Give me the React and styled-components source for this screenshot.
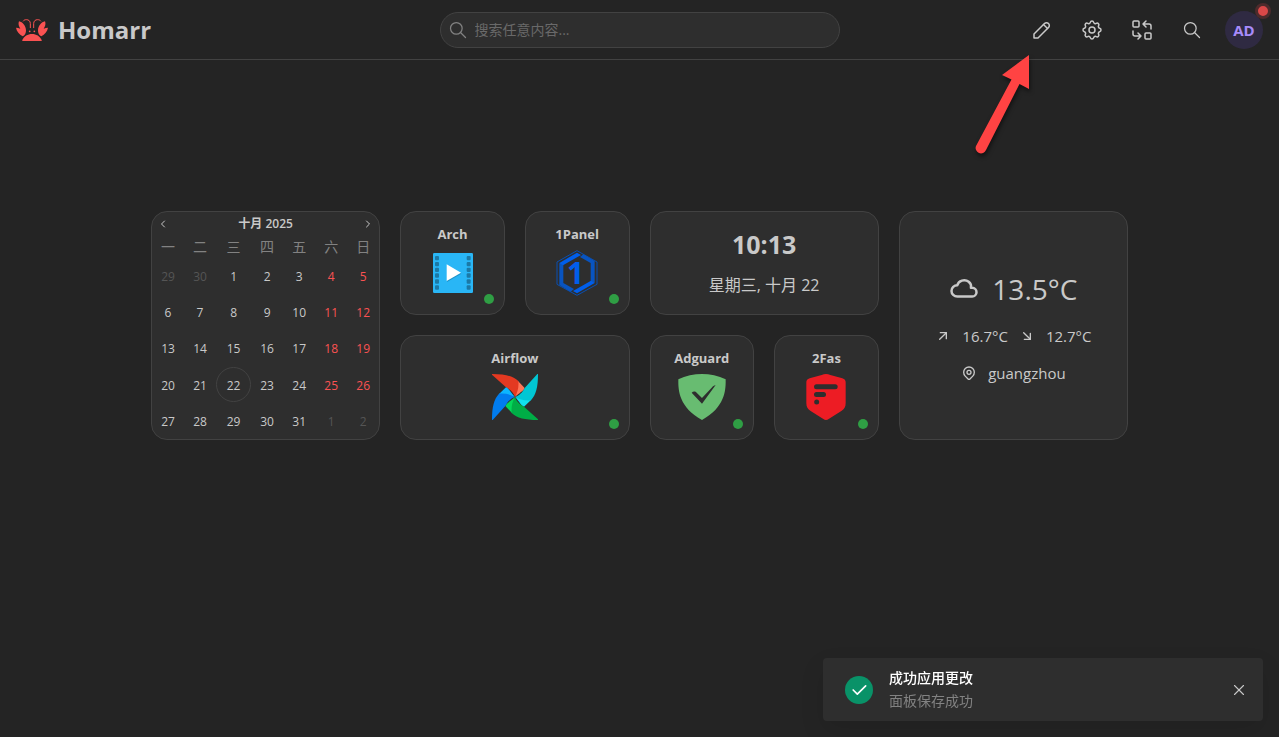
import React from 'react';
import styled, { createGlobalStyle } from 'styled-components';
import {
  TbPencil,
  TbSettings,
  TbReplace,
  TbSearch,
  TbChevronLeft,
  TbChevronRight,
  TbCloud,
  TbArrowUpRight,
  TbArrowDownRight,
  TbMapPin,
  TbCheck,
  TbX,
} from 'react-icons/tb';

const weekdays = ['一', '二', '三', '四', '五', '六', '日'];
const firstDay = new Date(2025, 8, 29);
const today = 22;

const weeks = [0, 1, 2, 3, 4].map((week) =>
  weekdays.map((_, day) => {
    const date = new Date(firstDay);
    date.setDate(firstDay.getDate() + week * 7 + day);
    return { day: date.getDate(), outside: date.getMonth() !== 9, weekend: day > 4 };
  })
);

const App = () => (
  <>
    <GlobalStyle />
    <Header />
    <Board>
      <Calendar />
      <AppTile name="Arch"><ArchIcon /></AppTile>
      <AppTile name="1Panel"><PanelIcon /></AppTile>
      <Clock />
      <Weather />
      <AppTile name="Airflow" span={2}><AirflowIcon /></AppTile>
      <AppTile name="Adguard"><AdguardIcon /></AppTile>
      <AppTile name="2Fas"><TwoFasIcon /></AppTile>
    </Board>
    <Notification />
    <PointerArrow />
  </>
);

export default App;

const Header = () => (
  <HeaderBar>
    <Brand href="#home">
      <LobsterLogo />
      <BrandName>Homarr</BrandName>
    </Brand>
    <SearchBox>
      <TbSearch size={20} />
      <SearchInput type="search" aria-label="搜索" placeholder="搜索任意内容..." />
    </SearchBox>
    <Actions>
      <ActionButton aria-label="编辑"><TbPencil size={24} /></ActionButton>
      <ActionButton aria-label="设置"><TbSettings size={24} /></ActionButton>
      <ActionButton aria-label="切换面板"><TbReplace size={24} /></ActionButton>
      <ActionButton aria-label="搜索"><TbSearch size={20} /></ActionButton>
      <Avatar>
        AD
        <AvatarDot />
      </Avatar>
    </Actions>
  </HeaderBar>
);

const Calendar = () => (
  <CalendarCard>
    <CalendarHeader>
      <MonthButton aria-label="上个月"><TbChevronLeft size={12} /></MonthButton>
      <MonthName>十月 2025</MonthName>
      <MonthButton aria-label="下个月"><TbChevronRight size={12} /></MonthButton>
    </CalendarHeader>
    <MonthTable>
      <thead>
        <tr>
          {weekdays.map((name) => <Weekday key={name}>{name}</Weekday>)}
        </tr>
      </thead>
      <tbody>
        {weeks.map((week) => (
          <tr key={week[0].day}>
            {week.map(({ day, outside, weekend }) => (
              <DayCell key={day}>
                <DayButton $outside={outside} $weekend={weekend} $today={day === today}>
                  {day}
                </DayButton>
              </DayCell>
            ))}
          </tr>
        ))}
      </tbody>
    </MonthTable>
  </CalendarCard>
);

const AppTile = ({ name, span = 1, children }) => (
  <TileLink href={`#${name.toLowerCase()}`} $span={span}>
    <TileName>{name}</TileName>
    {children}
    <StatusDot />
  </TileLink>
);

const Clock = () => (
  <ClockCard>
    <Time>10:13</Time>
    <Today>星期三, 十月 22</Today>
  </ClockCard>
);

const Weather = () => (
  <WeatherCard>
    <Temperature>
      <TbCloud size={30} />
      13.5°C
    </Temperature>
    <WeatherRow>
      <TbArrowUpRight size={16} />
      <span>16.7°C</span>
      <TbArrowDownRight size={16} />
      <span>12.7°C</span>
    </WeatherRow>
    <WeatherRow>
      <TbMapPin size={16} />
      <span>guangzhou</span>
    </WeatherRow>
  </WeatherCard>
);

const Notification = () => (
  <Toast role="status">
    <ToastIcon><TbCheck size={20} /></ToastIcon>
    <ToastBody>
      <ToastTitle>成功应用更改</ToastTitle>
      <ToastText>面板保存成功</ToastText>
    </ToastBody>
    <CloseButton aria-label="关闭"><TbX size={18} /></CloseButton>
  </Toast>
);

// Drawings

const LobsterLogo = () => (
  <svg width="32" height="22" viewBox="0 0 96 66" fill="#fa5252">
    <path d="M21 66c-2 0-3-1-2-3 5-11 16-18 29-18s24 7 29 18c1 2 0 3-2 3z" />
    <path d="M9 7c11 2 21 14 21 28 0 8-4 14-10 17C10 46 2 38 0 26c4 0 9 1 13 3C8 22 6 14 9 7z" />
    <path d="M87 7c-11 2-21 14-21 28 0 8 4 14 10 17 10-6 18-14 20-26-4 0-9 1-13 3 5-7 7-15 4-22z" />
    <circle cx="41" cy="37" r="2.6" />
    <circle cx="55" cy="37" r="2.6" />
    <path
      d="M43 26V14C43 6 38 2 31 2c-4 0-7 1-9 4M53 26V14C53 6 58 2 65 2c4 0 7 1 9 4"
      fill="none"
      stroke="#fa5252"
      strokeWidth="3"
      strokeLinecap="round"
    />
  </svg>
);

const sprockets = [9, 27, 44, 61, 79, 97];

const ArchIcon = () => (
  <svg width="40" height="46" viewBox="0 0 120 138">
    <rect x="0" y="9" width="120" height="120" rx="4" fill="#29b6f6" />
    {sprockets.map((y) => (
      <g key={y} fill="#1b79a6">
        <rect x="6" y={y + 9} width="12" height="13" rx="3" />
        <rect x="101" y={y + 9} width="12" height="13" rx="3" />
      </g>
    ))}
    <path d="M42 46l43 25-43 25z" fill="#176f98" opacity="0.5" />
    <path d="M41 43l43 25-43 25z" fill="#fff" />
  </svg>
);

const PanelIcon = () => (
  <svg width="42" height="46" viewBox="0 0 124 138">
    <path d="M62 2l60 34v67l-60 33-60-33V36z" fill="none" stroke="#0a4fb0" strokeWidth="3" />
    <path d="M9 40l12-1v60l32 18-10 8-34-20z" fill="#0854c1" />
    <path d="M115 98l-12 1V39L71 21l10-8 34 20z" fill="#0854c1" />
    <path d="M9 39L62 8l12 7-54 31z" fill="#005eeb" />
    <path d="M115 99l-53 31-12-7 54-31z" fill="#005eeb" />
    <text
      x="58"
      y="102"
      textAnchor="middle"
      fontFamily="'Open Sans', sans-serif"
      fontWeight="700"
      fontSize="90"
      fill="#005eeb"
    >
      1
    </text>
  </svg>
);

const blades = [
  { angle: 0, dark: '#e43921', light: '#ff7557' },
  { angle: 90, dark: '#00c7d4', light: '#11e1ee' },
  { angle: 180, dark: '#00ad46', light: '#04d659' },
  { angle: 270, dark: '#017cee', light: '#0cb6ff' },
];

const AirflowIcon = () => (
  <svg width="46" height="46" viewBox="0 0 138 138">
    {blades.map(({ angle, dark, light }) => (
      <g key={angle} transform={`rotate(${angle} 69 69)`}>
        <path d="M78 21l20 21c-4 10-16 14-29 27z" fill={light} />
        <path d="M69 69C66 58 56 47 42 40L0 2c-1-1 0-2 1-2 38 0 62 6 78 21 2 18-2 34-10 48z" fill={dark} />
      </g>
    ))}
    <circle cx="69" cy="69" r="3" fill="#51504f" />
  </svg>
);

const AdguardIcon = () => (
  <svg width="48" height="46" viewBox="0 0 142 138">
    <path d="M71 0C48 0 21 5 0 16c0 24-3 82 71 122 74-40 71-98 71-122C121 5 94 0 71 0z" fill="#68bc71" />
    <path d="M71 89L40 56c6-6 12-3 15 0l16 16 29-31c3-3 7-7 12-8z" fill="#2e2e2e" />
  </svg>
);

const TwoFasIcon = () => (
  <svg width="40" height="46" viewBox="0 0 118 138">
    <path
      d="M46 3c9-4 17-4 26 0l36 10c7 2 10 6 10 12v62c0 12-4 18-13 24l-38 24c-5 4-11 4-16 0l-38-24C4 105 0 99 0 87V25c0-6 3-10 10-12z"
      fill="#ed1c24"
    />
    <g fill="#2e2e2e">
      <rect x="23" y="31" width="71" height="15" rx="7.5" />
      <rect x="23" y="54" width="36" height="15" rx="7.5" />
      <circle cx="31" cy="84" r="7.5" />
    </g>
  </svg>
);

const PointerArrow = () => (
  <ArrowSvg width="66" height="116" viewBox="0 0 66 116" aria-hidden="true">
    <path
      d="M59 7v34l-9.500-5L16 102a5 5 0 0 1-10-4L41.500 31.500 32 27z"
      fill="#ff4343"
    />
  </ArrowSvg>
);

// Styles

const GlobalStyle = createGlobalStyle`
  * {
    box-sizing: border-box;
  }
  body {
    margin: 0;
    background: #242424;
    color: #c9c9c9;
    font-family: "Open Sans", "Noto Sans CJK SC", sans-serif;
    font-size: 15px;
    line-height: 20px;
  }
  button,
  input {
    font: inherit;
    color: inherit;
  }
  button {
    padding: 0;
    border: 0;
    background: none;
    cursor: pointer;
  }
  a {
    color: inherit;
    text-decoration: none;
  }
  svg {
    display: block;
    flex-shrink: 0;
  }
`;

const HeaderBar = styled.header`
  display: grid;
  grid-template-columns: 1fr minmax(200px, 400px) 1fr;
  align-items: center;
  height: 60px;
  padding: 0 16px;
  border-bottom: 1px solid #424242;
`;

const Brand = styled.a`
  display: flex;
  align-items: center;
  gap: 10px;
`;

const BrandName = styled.h1`
  margin: 0;
  font-size: 24px;
  line-height: 32px;
`;

const SearchBox = styled.label`
  display: flex;
  align-items: center;
  gap: 7px;
  height: 36px;
  padding: 0 16px 0 7px;
  border: 1px solid #424242;
  border-radius: 18px;
  background: #2e2e2e;
  color: #828282;
  & svg {
    stroke-width: 1.5;
  }
`;

const SearchInput = styled.input`
  flex: 1;
  min-width: 0;
  padding: 0;
  border: 0;
  outline: 0;
  background: none;
  font-size: 14px;
  &::placeholder {
    color: #696969;
    opacity: 1;
  }
`;

const Actions = styled.div`
  display: flex;
  align-items: center;
  justify-content: flex-end;
  gap: 16px;
  & svg {
    stroke-width: 1.5;
  }
`;

const ActionButton = styled.button`
  display: flex;
  align-items: center;
  justify-content: center;
  width: 34px;
  height: 34px;
`;

const Avatar = styled.button`
  position: relative;
  width: 38px;
  height: 38px;
  border-radius: 50%;
  background: #2f2a42;
  color: #a78bfa;
  font-weight: 700;
`;

const AvatarDot = styled.span`
  position: absolute;
  top: -8px;
  right: -8px;
  width: 16px;
  height: 16px;
  border: 3px solid #4d2b2c;
  border-radius: 50%;
  background: #d94848;
`;

const Board = styled.main`
  display: grid;
  grid-template-columns: repeat(8, minmax(0, 1fr));
  grid-template-rows: 104px auto;
  gap: 20px;
  width: calc(100% - 32px);
  max-width: 977px;
  margin: 151px auto 0;
`;

const Card = styled.section`
  border: 1px solid #424242;
  border-radius: 16px;
  background: #2e2e2e;
`;

const CalendarCard = styled(Card)`
  grid-column: span 2;
  grid-row: span 2;
`;

const CalendarHeader = styled.div`
  display: flex;
  align-items: center;
  justify-content: space-between;
  height: 24px;
  padding: 0 5px;
`;

const MonthButton = styled.button`
  display: flex;
`;

const MonthName = styled.h2`
  margin: 0;
  font-size: 12px;
  font-weight: 600;
`;

const MonthTable = styled.table`
  width: 100%;
  border-collapse: collapse;
`;

const Weekday = styled.th`
  height: 22px;
  padding: 0;
  color: #828282;
  font-size: 14px;
  font-weight: 400;
`;

const DayCell = styled.td`
  height: 36px;
  padding: 1px 0;
`;

const DayButton = styled.button`
  display: block;
  width: ${({ $today }) => ($today ? '35px' : '32px')};
  height: ${({ $today }) => ($today ? '35px' : '34px')};
  padding: 2px 0 0;
  border: 1px solid ${({ $today }) => ($today ? '#424242' : 'transparent')};
  border-radius: 50%;
  margin: 0 auto;
  color: ${({ $outside, $weekend }) => ($outside ? '#555' : $weekend ? '#fa5252' : '#c9c9c9')};
  font-size: 12px;
`;

const TileLink = styled(Card).attrs({ as: 'a' })`
  position: relative;
  grid-column: span ${({ $span }) => $span};
  display: flex;
  flex-direction: column;
  align-items: center;
  gap: 6px;
  padding-top: 12px;
`;

const TileName = styled.span`
  font-size: 13px;
  font-weight: 700;
`;

const StatusDot = styled.span`
  position: absolute;
  right: 10px;
  bottom: 10px;
  width: 10px;
  height: 10px;
  border-radius: 50%;
  background: #2f9e44;
`;

const ClockCard = styled(Card)`
  grid-column: span 2;
  display: flex;
  flex-direction: column;
  align-items: center;
  justify-content: center;
  gap: 15px;
  padding-bottom: 4px;
`;

const Time = styled.time`
  font-size: 25px;
  font-weight: 700;
  line-height: 32px;
`;

const Today = styled.span`
  font-size: 16px;
`;

const WeatherCard = styled(Card)`
  grid-column: span 2;
  grid-row: span 2;
  display: flex;
  flex-direction: column;
  align-items: center;
  justify-content: center;
  gap: 17px;
`;

const Temperature = styled.div`
  display: flex;
  align-items: center;
  gap: 13px;
  font-size: 28px;
  line-height: 40px;
`;

const WeatherRow = styled.div`
  display: flex;
  align-items: center;
  gap: 11px;
`;

const Toast = styled.aside`
  position: fixed;
  right: 16px;
  bottom: 16px;
  display: flex;
  align-items: center;
  gap: 16px;
  width: 440px;
  max-width: calc(100% - 32px);
  padding: 10px 15px 10px 22px;
  border-radius: 4px;
  background: #2e2e2e;
  box-shadow: 0 10px 24px rgba(0, 0, 0, 0.1);
  font-size: 14px;
`;

const ToastIcon = styled.span`
  display: flex;
  align-items: center;
  justify-content: center;
  width: 28px;
  height: 28px;
  border-radius: 50%;
  background: #099268;
  color: #fff;
`;

const ToastBody = styled.div`
  display: flex;
  flex: 1;
  flex-direction: column;
  gap: 3px;
`;

const ToastTitle = styled.strong`
  color: #fff;
  font-weight: 500;
`;

const ToastText = styled.span`
  color: #828282;
`;

const CloseButton = styled.button`
  & svg {
    stroke-width: 1.5;
  }
`;

const ArrowSvg = styled.svg`
  position: absolute;
  top: 48px;
  right: 243px;
  pointer-events: none;
  filter: drop-shadow(1px 3px 2px rgba(0, 0, 0, 0.5));
`;
